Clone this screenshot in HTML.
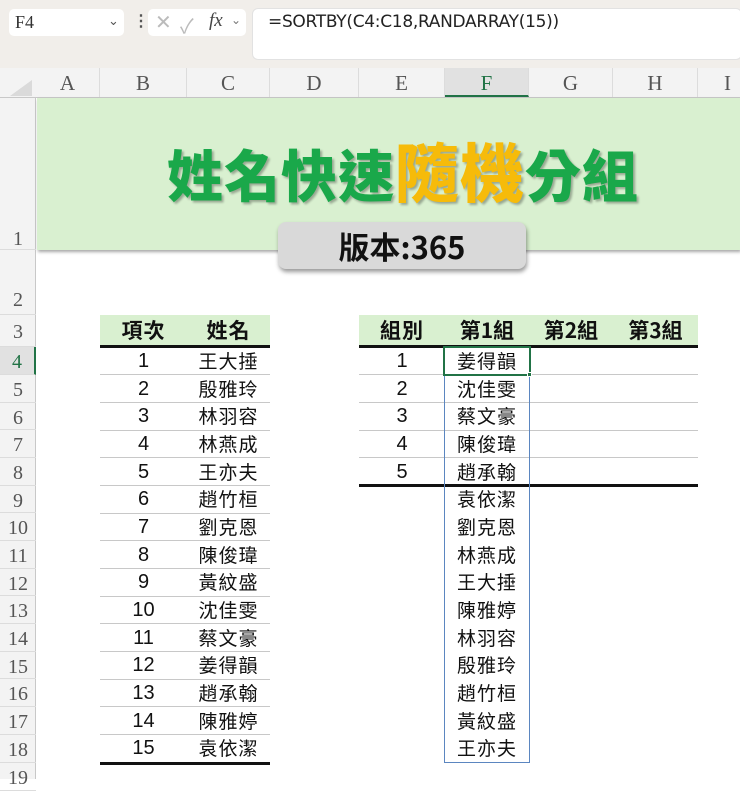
<!DOCTYPE html>
<html><head><meta charset="utf-8"><style>
*{margin:0;padding:0;box-sizing:border-box}
body{width:740px;height:779px;overflow:hidden;background:#fff;position:relative;font-family:"Liberation Sans","Noto Sans CJK TC",sans-serif}
.a{position:absolute}
.ser{font-family:"Liberation Serif",serif;color:#555}
.rh{position:absolute;left:0;width:36px;text-align:center;font-family:"Liberation Serif",serif;color:#555;font-size:20px;border-bottom:1px solid #dcdcdc}
.ch{position:absolute;top:68px;height:29px;text-align:center;font-family:"Liberation Serif",serif;color:#555;font-size:21px;line-height:31px;border-right:1px solid #dcdcdc}
.c{position:absolute;height:28px;line-height:28px;font-size:20px;text-align:center;color:#111}
.cjk{font-family:"Noto Sans CJK TC",sans-serif;font-size:19px;letter-spacing:1px}
.hl{position:absolute;height:1px;background:#c8c8c8}
</style></head><body>
<div class="a" style="left:0;top:0;width:740px;height:68px;background:#f1eeea"></div>
<div class="a" style="left:9px;top:9px;width:115px;height:27px;background:#fff;border-radius:5px;"></div>
<div class="a ser" style="left:15px;top:12px;font-size:18px;color:#333">F4</div>
<div class="a" style="left:108px;top:13px;font-size:13px;color:#555">&#8964;</div>
<div class="a" style="left:133px;top:11px;font-size:16px;color:#555;font-weight:bold">⋮</div>
<div class="a" style="left:148px;top:9px;width:98px;height:27px;background:#fff;border-radius:5px;"></div>
<div class="a" style="left:155px;top:10px;font-size:20px;color:#bbb">✕</div>
<div class="a" style="left:180px;top:10px;font-size:20px;color:#bbb">✓</div>
<div class="a" style="left:209px;top:10px;font-size:19px;font-style:italic;font-family:'Liberation Serif',serif;color:#444">fx</div>
<div class="a" style="left:231px;top:13px;font-size:12px;color:#777">&#8964;</div>
<div class="a" style="left:252px;top:8px;width:490px;height:52px;background:#fff;border-radius:6px;border:1px solid #e2e2e2"></div>
<div class="a" style="left:268px;top:12px;font-size:17px;color:#222;font-family:'DejaVu Sans',sans-serif;letter-spacing:-0.3px">=SORTBY(C4:C18,RANDARRAY(15))</div>
<div class="a" style="left:0;top:68px;width:740px;height:30px;background:#f3f3f3;border-bottom:1px solid #c8c8c8"></div>
<div class="a" style="left:10px;top:80px;width:0;height:0;border-left:22px solid transparent;border-bottom:16px solid #dadada"></div>
<div class="a" style="left:0;top:98px;width:36px;height:681px;background:#f3f3f3;border-right:1px solid #c8c8c8"></div>
<div class="ch" style="left:36px;width:64px">A</div>
<div class="ch" style="left:100px;width:87px">B</div>
<div class="ch" style="left:187px;width:83px">C</div>
<div class="ch" style="left:270px;width:89px">D</div>
<div class="ch" style="left:359px;width:86px">E</div>
<div class="ch" style="left:445px;width:84px;background:#e1e1e1;border-bottom:2px solid #217346;color:#217346">F</div>
<div class="ch" style="left:529px;width:84px">G</div>
<div class="ch" style="left:613px;width:85px">H</div>
<div class="ch" style="left:698px;width:60px">I</div>
<div class="rh" style="top:98px;height:152px;line-height:282px">1</div>
<div class="rh" style="top:250px;height:65px;line-height:100px">2</div>
<div class="rh" style="top:315px;height:32px;line-height:34px">3</div>
<div class="rh" style="top:347px;height:28px;line-height:30px;background:#e1e1e1;color:#217346;border-right:2px solid #217346">4</div>
<div class="rh" style="top:375px;height:28px;line-height:30px">5</div>
<div class="rh" style="top:403px;height:27px;line-height:30px">6</div>
<div class="rh" style="top:430px;height:28px;line-height:30px">7</div>
<div class="rh" style="top:458px;height:28px;line-height:30px">8</div>
<div class="rh" style="top:486px;height:27px;line-height:30px">9</div>
<div class="rh" style="top:513px;height:28px;line-height:30px">10</div>
<div class="rh" style="top:541px;height:28px;line-height:30px">11</div>
<div class="rh" style="top:569px;height:27px;line-height:30px">12</div>
<div class="rh" style="top:596px;height:28px;line-height:30px">13</div>
<div class="rh" style="top:624px;height:28px;line-height:30px">14</div>
<div class="rh" style="top:652px;height:27px;line-height:30px">15</div>
<div class="rh" style="top:679px;height:28px;line-height:30px">16</div>
<div class="rh" style="top:707px;height:28px;line-height:30px">17</div>
<div class="rh" style="top:735px;height:28px;line-height:30px">18</div>
<div class="rh" style="top:763px;height:28px;line-height:30px">19</div>
<div class="a" style="left:37px;top:98px;width:703px;height:152px;background:#d9f0d0;box-shadow:1px 2px 3px rgba(0,0,0,.35)"></div>
<div class="a" style="left:36px;top:132px;width:734px;text-align:center;font-family:'Noto Sans CJK TC',sans-serif;font-weight:900;font-size:56px;line-height:76px;color:#1aa84a;text-shadow:2px 2px 2px rgba(0,0,0,.3);letter-spacing:1px">姓名快速<span style="color:#f6bb0a;font-size:64px">隨機</span>分組</div>
<div class="a" style="left:278px;top:222px;width:248px;height:47px;background:#d9d9d9;border-radius:8px;box-shadow:1px 3px 4px rgba(0,0,0,.4);text-align:center;font-family:'Noto Sans CJK TC',sans-serif;font-weight:bold;font-size:31px;line-height:47px;color:#111">版本:365</div>
<div class="a" style="left:100px;top:315px;width:170px;height:31px;background:#d9f0d0"></div>
<div class="c cjk" style="left:100px;top:316px;width:87px;font-weight:bold;font-size:21px">項次</div>
<div class="c cjk" style="left:187px;top:316px;width:83px;font-weight:bold;font-size:21px">姓名</div>
<div class="a" style="left:100px;top:345px;width:170px;height:3px;background:#111"></div>
<div class="a" style="left:359px;top:315px;width:339px;height:31px;background:#d9f0d0"></div>
<div class="c cjk" style="left:359px;top:316px;width:86px;font-weight:bold;font-size:21px">組別</div>
<div class="c cjk" style="left:445px;top:316px;width:84px;font-weight:bold;font-size:21px;letter-spacing:0">第1組</div>
<div class="c cjk" style="left:529px;top:316px;width:84px;font-weight:bold;font-size:21px;letter-spacing:0">第2組</div>
<div class="c cjk" style="left:613px;top:316px;width:85px;font-weight:bold;font-size:21px;letter-spacing:0">第3組</div>
<div class="a" style="left:359px;top:345px;width:339px;height:3px;background:#111"></div>
<div class="hl" style="left:100px;top:374px;width:170px"></div><div class="hl" style="left:359px;top:374px;width:339px"></div>
<div class="hl" style="left:100px;top:402px;width:170px"></div><div class="hl" style="left:359px;top:402px;width:339px"></div>
<div class="hl" style="left:100px;top:430px;width:170px"></div><div class="hl" style="left:359px;top:430px;width:339px"></div>
<div class="hl" style="left:100px;top:457px;width:170px"></div><div class="hl" style="left:359px;top:457px;width:339px"></div>
<div class="hl" style="left:100px;top:485px;width:170px"></div>
<div class="a" style="left:359px;top:484px;width:339px;height:3px;background:#111"></div>
<div class="hl" style="left:100px;top:513px;width:170px"></div>
<div class="hl" style="left:100px;top:540px;width:170px"></div>
<div class="hl" style="left:100px;top:568px;width:170px"></div>
<div class="hl" style="left:100px;top:596px;width:170px"></div>
<div class="hl" style="left:100px;top:623px;width:170px"></div>
<div class="hl" style="left:100px;top:651px;width:170px"></div>
<div class="hl" style="left:100px;top:679px;width:170px"></div>
<div class="hl" style="left:100px;top:706px;width:170px"></div>
<div class="hl" style="left:100px;top:734px;width:170px"></div>
<div class="a" style="left:100px;top:762px;width:170px;height:3px;background:#111"></div>
<div class="a" style="left:444px;top:347px;width:86px;height:416px;border:1px solid #5b86c0"></div>
<div class="a" style="left:443px;top:346px;width:88px;height:30px;border:2px solid #217346"></div>
<div class="a" style="left:527px;top:372px;width:5px;height:5px;background:#217346;border:1px solid #fff"></div>
<div class="c" style="left:100px;top:347px;width:87px">1</div><div class="c cjk" style="left:187px;top:347px;width:83px">王大捶</div>
<div class="c" style="left:100px;top:375px;width:87px">2</div><div class="c cjk" style="left:187px;top:375px;width:83px">殷雅玲</div>
<div class="c" style="left:100px;top:402px;width:87px">3</div><div class="c cjk" style="left:187px;top:402px;width:83px">林羽容</div>
<div class="c" style="left:100px;top:430px;width:87px">4</div><div class="c cjk" style="left:187px;top:430px;width:83px">林燕成</div>
<div class="c" style="left:100px;top:458px;width:87px">5</div><div class="c cjk" style="left:187px;top:458px;width:83px">王亦夫</div>
<div class="c" style="left:100px;top:485px;width:87px">6</div><div class="c cjk" style="left:187px;top:485px;width:83px">趙竹桓</div>
<div class="c" style="left:100px;top:513px;width:87px">7</div><div class="c cjk" style="left:187px;top:513px;width:83px">劉克恩</div>
<div class="c" style="left:100px;top:541px;width:87px">8</div><div class="c cjk" style="left:187px;top:541px;width:83px">陳俊瑋</div>
<div class="c" style="left:100px;top:568px;width:87px">9</div><div class="c cjk" style="left:187px;top:568px;width:83px">黃紋盛</div>
<div class="c" style="left:100px;top:596px;width:87px">10</div><div class="c cjk" style="left:187px;top:596px;width:83px">沈佳雯</div>
<div class="c" style="left:100px;top:624px;width:87px">11</div><div class="c cjk" style="left:187px;top:624px;width:83px">蔡文豪</div>
<div class="c" style="left:100px;top:651px;width:87px">12</div><div class="c cjk" style="left:187px;top:651px;width:83px">姜得韻</div>
<div class="c" style="left:100px;top:679px;width:87px">13</div><div class="c cjk" style="left:187px;top:679px;width:83px">趙承翰</div>
<div class="c" style="left:100px;top:707px;width:87px">14</div><div class="c cjk" style="left:187px;top:707px;width:83px">陳雅婷</div>
<div class="c" style="left:100px;top:734px;width:87px">15</div><div class="c cjk" style="left:187px;top:734px;width:83px">袁依潔</div>
<div class="c" style="left:359px;top:347px;width:86px">1</div><div class="c cjk" style="left:445px;top:347px;width:84px">姜得韻</div>
<div class="c" style="left:359px;top:375px;width:86px">2</div><div class="c cjk" style="left:445px;top:375px;width:84px">沈佳雯</div>
<div class="c" style="left:359px;top:402px;width:86px">3</div><div class="c cjk" style="left:445px;top:402px;width:84px">蔡文豪</div>
<div class="c" style="left:359px;top:430px;width:86px">4</div><div class="c cjk" style="left:445px;top:430px;width:84px">陳俊瑋</div>
<div class="c" style="left:359px;top:458px;width:86px">5</div><div class="c cjk" style="left:445px;top:458px;width:84px">趙承翰</div>
<div class="c cjk" style="left:445px;top:485px;width:84px">袁依潔</div>
<div class="c cjk" style="left:445px;top:513px;width:84px">劉克恩</div>
<div class="c cjk" style="left:445px;top:541px;width:84px">林燕成</div>
<div class="c cjk" style="left:445px;top:568px;width:84px">王大捶</div>
<div class="c cjk" style="left:445px;top:596px;width:84px">陳雅婷</div>
<div class="c cjk" style="left:445px;top:624px;width:84px">林羽容</div>
<div class="c cjk" style="left:445px;top:651px;width:84px">殷雅玲</div>
<div class="c cjk" style="left:445px;top:679px;width:84px">趙竹桓</div>
<div class="c cjk" style="left:445px;top:707px;width:84px">黃紋盛</div>
<div class="c cjk" style="left:445px;top:734px;width:84px">王亦夫</div>
</body></html>
